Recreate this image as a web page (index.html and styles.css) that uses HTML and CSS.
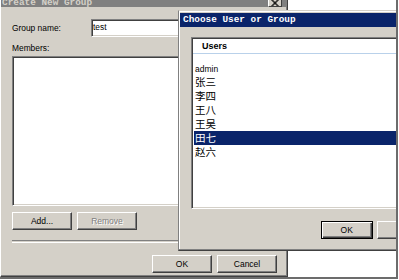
FILE: index.html
```html
<!DOCTYPE html>
<html>
<head>
<meta charset="utf-8">
<link rel="stylesheet" href="styles.css">
</head>
<body>
<div class="desk">
  <div class="win win-back">
    <div class="tb tb-inactive">
      <span class="tb-text">Create New Group</span>
      <span class="close"><svg width="10" height="6" viewBox="0 0 10 6"><path d="M1.5 0 L7.5 6 M7.5 0 L1.5 6 M2.5 0 L8.5 6 M8.5 0 L2.5 6" stroke="#000" stroke-width="1" fill="none"/></svg></span>
    </div>
    <div class="back-body">
      <div class="row-name">
        <span class="lbl name-lbl">Group name:</span>
        <div class="field">test</div>
      </div>
      <div class="lbl members">Members:</div>
      <div class="listbox"></div>
      <div class="btnrow">
        <button class="btn">Add...</button>
        <button class="btn disabled">Remove</button>
      </div>
      <div class="sep"></div>
      <div class="btnrow end">
        <button class="btn">OK</button>
        <button class="btn">Cancel</button>
      </div>
    </div>
  </div>
  <div class="win win-front">
    <div class="tb tb-active">Choose User or Group</div>
    <div class="front-body">
      <div class="listview">
        <div class="lv-head">Users</div>
        <ul class="lv-items">
          <li><span class="latin">admin</span></li>
          <li>张三</li>
          <li>李四</li>
          <li>王八</li>
          <li>王吴</li>
          <li class="sel">田七</li>
          <li>赵六</li>
        </ul>
      </div>
      <div class="btnrow front-btns">
        <button class="btn default">OK</button>
        <button class="btn" aria-label="Cancel"></button>
      </div>
    </div>
  </div>
</div>
</body>
</html>
```

FILE: styles.css
```css
html, body {
  margin: 0;
  padding: 0;
  background: #fff;
}
.desk {
  position: relative;
  width: 396px;
  height: 277px;
  overflow: hidden;
  background: #fff;
  border-right: 2px solid #6c6c6c;
  border-bottom: 2px solid #6c6c6c;
  font-family: "Liberation Sans", Arial, sans-serif;
}
.win {
  position: absolute;
  box-sizing: border-box;
  background: #d4d0c8;
  display: flex;
  flex-direction: column;
}
.win-back {
  left: 0;
  top: 0;
  width: 288px;
  height: 277px;
  border-left: 1px solid #ffffff;
  border-right: 1px solid #404040;
  border-bottom: 1px solid #404040;
  box-shadow: inset -1px -1px 0 #808080;
}
.tb {
  font-family: "Liberation Mono", "Courier New", monospace;
  font-weight: bold;
  font-size: 9.4px;
  white-space: nowrap;
  overflow: hidden;
  display: flex;
}
.tb-inactive {
  height: 7px;
  line-height: 6px;
  background: #808080;
  color: #d4d0c8;
  padding-left: 1px;
}
.tb-text {
  flex: 1;
}
.close {
  width: 14px;
  height: 7px;
  box-sizing: border-box;
  margin-right: 5px;
  background: #d4d0c8;
  border-left: 1px solid #fff;
  border-right: 1px solid #404040;
  border-bottom: 1px solid #404040;
  display: flex;
  justify-content: center;
}
.close svg {
  display: block;
}
.back-body {
  padding: 0 10px 0 11px;
  font-size: 8.4px;
  color: #000;
}
.lbl {
  line-height: 11px;
}
.row-name {
  margin-top: 12px;
  display: flex;
  align-items: center;
}
.name-lbl {
  width: 79px;
  padding-top: 1px;
}
.field, .listbox, .listview {
  box-sizing: border-box;
  background: #fff;
  border: 1px solid;
  border-color: #808080 #ffffff #ffffff #808080;
  box-shadow: inset 1px 1px 0 #404040, inset -1px -1px 0 #d4d0c8;
}
.field {
  flex: 1;
  height: 18px;
  line-height: 15px;
  padding-left: 1px;
}
.members {
  margin-top: 6px;
  margin-bottom: 2px;
}
.listbox {
  height: 150px;
}
.btnrow {
  display: flex;
  gap: 5px;
  margin-top: 6px;
}
.btnrow.end {
  justify-content: flex-end;
  margin-top: 12px;
}
.sep {
  margin-top: 10px;
  height: 1px;
  border-top: 1px solid #808080;
  border-bottom: 1px solid #ffffff;
}
.btn {
  box-sizing: border-box;
  width: 60px;
  height: 18px;
  padding: 0;
  margin: 0;
  background: #d4d0c8;
  font-family: "Liberation Sans", Arial, sans-serif;
  font-size: 8.5px;
  color: #000;
  border: 1px solid;
  border-color: #ffffff #404040 #404040 #ffffff;
  box-shadow: inset -1px -1px 0 #808080;
  border-radius: 0;
}
.btn.disabled {
  color: #808080;
  text-shadow: 1px 1px 0 #ffffff;
}
.btn.default {
  border: 1px solid #000;
  box-shadow: inset 1px 1px 0 #ffffff, inset -1px -1px 0 #404040, inset -2px -2px 0 #808080;
}
.win-front {
  left: 178px;
  top: 10px;
  width: 250px;
  height: 241px;
  border-left: 1px solid #808080;
  border-top: 1px solid #d4d0c8;
  border-bottom: 1px solid #404040;
  box-shadow: inset 0 -1px 0 #808080, inset 1px 1px 0 #ffffff;
  padding: 2px 0 0 1px;
}
.tb-active {
  height: 14px;
  line-height: 14px;
  background: #0a246a;
  color: #fff;
  padding-left: 3px;
}
.front-body {
  padding: 10px 0 0 11px;
}
.listview {
  width: 209px;
  height: 172px;
  padding: 1px;
}
.lv-head {
  height: 14px;
  line-height: 14px;
  border-bottom: 1px solid #b9d1ea;
  font-weight: bold;
  font-size: 9px;
  padding-left: 9px;
  color: #000;
}
.lv-items {
  list-style: none;
  margin: 0;
  padding: 7px 0 0 0;
  font-family: "Liberation Sans", "Noto Sans CJK SC", sans-serif;
  font-size: 10.5px;
  color: #000;
}
.lv-items li {
  height: 14px;
  line-height: 14px;
  margin: 0 2px 0 1px;
  padding-left: 1px;
}
.lv-items li.sel {
  background: #0a246a;
  color: #fff;
}
.latin {
  font-size: 8.5px;
}
.front-btns {
  margin-top: 12px;
  margin-left: 130px;
  gap: 4px;
}
```
